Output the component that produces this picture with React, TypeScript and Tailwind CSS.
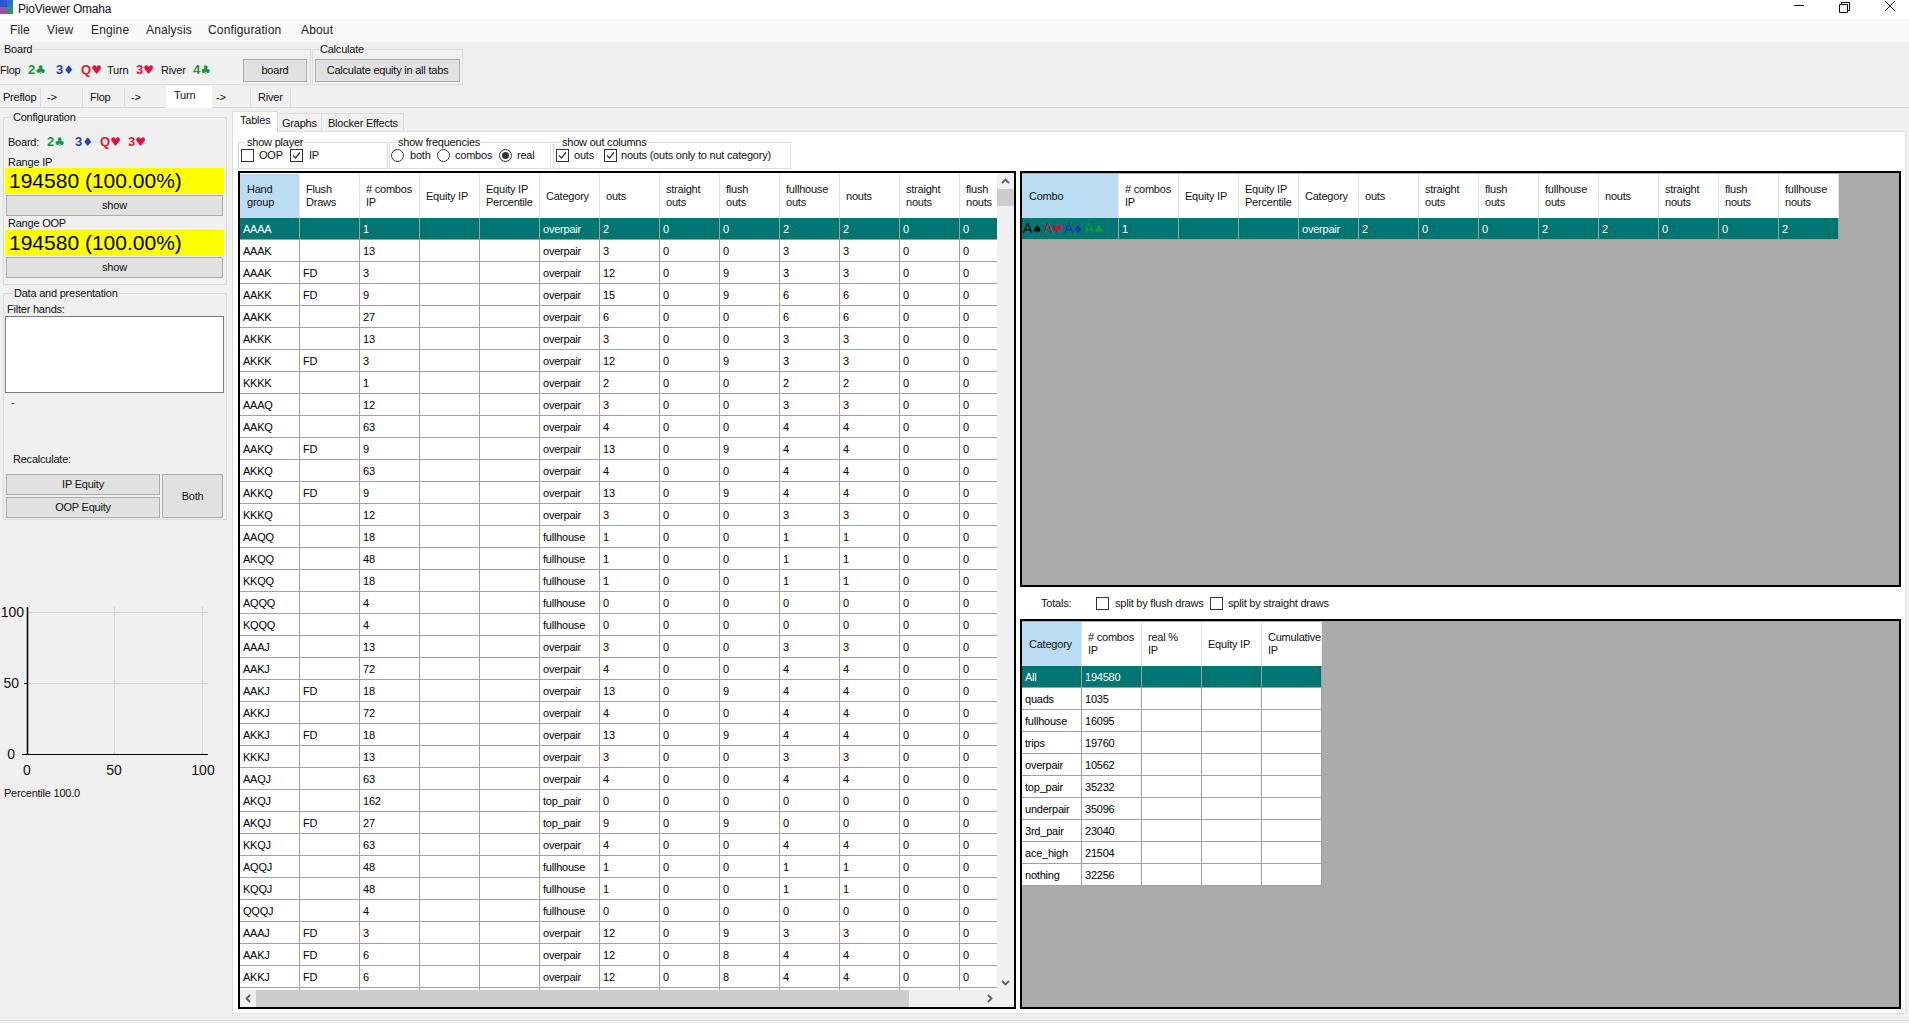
import type { ReactNode } from "react";

const FONT = "font-['Liberation_Sans',Arial,sans-serif]";

type Row = [string, string, string, string, string, string, string, string, string, string, string];

// hand, flush draws, combos, category, outs, straight, flush, fullhouse, nouts, straight nouts, flush nouts
const rows: Row[] = [
  ["AAAA", "", "1", "overpair", "2", "0", "0", "2", "2", "0", "0"],
  ["AAAK", "", "13", "overpair", "3", "0", "0", "3", "3", "0", "0"],
  ["AAAK", "FD", "3", "overpair", "12", "0", "9", "3", "3", "0", "0"],
  ["AAKK", "FD", "9", "overpair", "15", "0", "9", "6", "6", "0", "0"],
  ["AAKK", "", "27", "overpair", "6", "0", "0", "6", "6", "0", "0"],
  ["AKKK", "", "13", "overpair", "3", "0", "0", "3", "3", "0", "0"],
  ["AKKK", "FD", "3", "overpair", "12", "0", "9", "3", "3", "0", "0"],
  ["KKKK", "", "1", "overpair", "2", "0", "0", "2", "2", "0", "0"],
  ["AAAQ", "", "12", "overpair", "3", "0", "0", "3", "3", "0", "0"],
  ["AAKQ", "", "63", "overpair", "4", "0", "0", "4", "4", "0", "0"],
  ["AAKQ", "FD", "9", "overpair", "13", "0", "9", "4", "4", "0", "0"],
  ["AKKQ", "", "63", "overpair", "4", "0", "0", "4", "4", "0", "0"],
  ["AKKQ", "FD", "9", "overpair", "13", "0", "9", "4", "4", "0", "0"],
  ["KKKQ", "", "12", "overpair", "3", "0", "0", "3", "3", "0", "0"],
  ["AAQQ", "", "18", "fullhouse", "1", "0", "0", "1", "1", "0", "0"],
  ["AKQQ", "", "48", "fullhouse", "1", "0", "0", "1", "1", "0", "0"],
  ["KKQQ", "", "18", "fullhouse", "1", "0", "0", "1", "1", "0", "0"],
  ["AQQQ", "", "4", "fullhouse", "0", "0", "0", "0", "0", "0", "0"],
  ["KQQQ", "", "4", "fullhouse", "0", "0", "0", "0", "0", "0", "0"],
  ["AAAJ", "", "13", "overpair", "3", "0", "0", "3", "3", "0", "0"],
  ["AAKJ", "", "72", "overpair", "4", "0", "0", "4", "4", "0", "0"],
  ["AAKJ", "FD", "18", "overpair", "13", "0", "9", "4", "4", "0", "0"],
  ["AKKJ", "", "72", "overpair", "4", "0", "0", "4", "4", "0", "0"],
  ["AKKJ", "FD", "18", "overpair", "13", "0", "9", "4", "4", "0", "0"],
  ["KKKJ", "", "13", "overpair", "3", "0", "0", "3", "3", "0", "0"],
  ["AAQJ", "", "63", "overpair", "4", "0", "0", "4", "4", "0", "0"],
  ["AKQJ", "", "162", "top_pair", "0", "0", "0", "0", "0", "0", "0"],
  ["AKQJ", "FD", "27", "top_pair", "9", "0", "9", "0", "0", "0", "0"],
  ["KKQJ", "", "63", "overpair", "4", "0", "0", "4", "4", "0", "0"],
  ["AQQJ", "", "48", "fullhouse", "1", "0", "0", "1", "1", "0", "0"],
  ["KQQJ", "", "48", "fullhouse", "1", "0", "0", "1", "1", "0", "0"],
  ["QQQJ", "", "4", "fullhouse", "0", "0", "0", "0", "0", "0", "0"],
  ["AAAJ", "FD", "3", "overpair", "12", "0", "9", "3", "3", "0", "0"],
  ["AAKJ", "FD", "6", "overpair", "12", "0", "8", "4", "4", "0", "0"],
  ["AKKJ", "FD", "6", "overpair", "12", "0", "8", "4", "4", "0", "0"],
  ["", "", "", "", "", "", "", "", "", "", ""],
];

const outsHeaders = [
  "outs",
  "straight\nouts",
  "flush\nouts",
  "fullhouse\nouts",
  "nouts",
  "straight\nnouts",
  "flush\nnouts",
];

const totals = [
  ["All", "194580"],
  ["quads", "1035"],
  ["fullhouse", "16095"],
  ["trips", "19760"],
  ["overpair", "10562"],
  ["top_pair", "35232"],
  ["underpair", "35096"],
  ["3rd_pair", "23040"],
  ["ace_high", "21504"],
  ["nothing", "32256"],
];

const suitColor = {
  "♣": "text-[#169a3e]",
  "♦": "text-[#2c3fb4]",
  "♥": "text-[#e3103c]",
};

function Card({ rank, suit, className }: { rank: string; suit: "♣" | "♦" | "♥"; className: string }) {
  return (
    <span className={`${className} ${suitColor[suit]} shrink-0 whitespace-nowrap text-[13px] font-bold tracking-normal`}>
      {rank}
      <span className="font-['DejaVu_Sans'] text-[12px]">{suit}</span>
    </span>
  );
}

function Group({ title, className, titleClass = "left-[8px]", children }: { title: string; className: string; titleClass?: string; children?: ReactNode }) {
  return (
    <div className={`relative border border-[#dcdcdc] ${className}`}>
      <span className={`absolute -top-[8px] ${titleClass} bg-inherit px-[1px] leading-[14px] whitespace-nowrap`}>{title}</span>
      {children}
    </div>
  );
}

function Button({ className, children }: { className: string; children: ReactNode }) {
  return (
    <div className={`flex items-center justify-center border border-[#adadad] bg-[#e1e1e1] ${className}`}>{children}</div>
  );
}

function Check({ checked = false, className = "" }: { checked?: boolean; className?: string }) {
  return (
    <span className={`flex h-[13px] w-[13px] shrink-0 items-center justify-center border border-[#333] bg-white ${className}`}>
      {checked && (
        <svg width="11" height="11" viewBox="0 0 11 11" fill="none" stroke="#333" strokeWidth="1.2">
          <path d="M2 5.5 L4.5 8 L9 2.5" />
        </svg>
      )}
    </span>
  );
}

function Radio({ checked = false, className = "" }: { checked?: boolean; className?: string }) {
  return (
    <span className={`flex h-[13px] w-[13px] shrink-0 items-center justify-center rounded-full border border-[#333] bg-white ${className}`}>
      {checked && <span className="h-[7px] w-[7px] rounded-full bg-[#333]" />}
    </span>
  );
}

function Chevron({ dir }: { dir: "up" | "down" | "left" | "right" }) {
  const d = {
    up: "M1 6 L4.5 2.5 L8 6",
    down: "M1 3 L4.5 6.5 L8 3",
    left: "M6 1 L2.5 4.5 L6 8",
    right: "M3 1 L6.5 4.5 L3 8",
  }[dir];
  return (
    <svg width="9" height="9" viewBox="0 0 9 9" fill="none" stroke="#606060" strokeWidth="1.8">
      <path d={d} />
    </svg>
  );
}

function HeaderCell({ text, sorted = false, className = "w-[60px]" }: { text: string; sorted?: boolean; className?: string }) {
  return (
    <div className={`flex h-[44px] shrink-0 items-center overflow-hidden whitespace-pre-line border-r border-[#e4e4e4] leading-[13px] ${sorted ? "bg-[#bcdcf4] pl-[7px]" : "bg-white pl-[6px]"} ${className}`}>
      {text}
    </div>
  );
}

function Cell({ children, selected, className = "w-[60px]" }: { children?: ReactNode; selected: boolean; className?: string }) {
  return (
    <div className={`flex h-[22px] shrink-0 items-center overflow-hidden whitespace-nowrap border-r border-b border-[#a0a0a0] pt-[1px] pl-[3px] ${selected ? "bg-[#007672] text-white" : "bg-white text-black"} ${className}`}>
      {children}
    </div>
  );
}

function MainTable() {
  const headers = ["Flush\nDraws", "# combos\nIP", "Equity IP", "Equity IP\nPercentile", "Category", ...outsHeaders];
  return (
    <div className="flex h-[838px] w-[778px] shrink-0 flex-col border-2 border-black bg-white">
      <div className="flex min-h-0 flex-1">
        <div className="w-[758px] overflow-hidden pt-[1px]">
          <div className="flex">
            <HeaderCell text={"Hand\ngroup"} sorted />
            {headers.map((h, i) => (
              <HeaderCell key={i} text={h} />
            ))}
          </div>
          {rows.map((r, i) => {
            const selected = i === 0;
            const cells = [r[0], r[1], r[2], "", "", r[3], r[4], r[5], r[6], r[7], r[8], r[9], r[10]];
            return (
              <div key={i} className="flex">
                {cells.map((c, j) => (
                  <Cell key={j} selected={selected}>
                    {c}
                  </Cell>
                ))}
              </div>
            );
          })}
        </div>
        <div className="flex w-[17px] shrink-0 flex-col bg-[#f0f0f0]">
          <div className="flex h-[16px] items-center justify-center">
            <Chevron dir="up" />
          </div>
          <div className="h-[17px] bg-[#cdcdcd]" />
          <div className="flex-1" />
          <div className="flex h-[16px] items-center justify-center">
            <Chevron dir="down" />
          </div>
        </div>
      </div>
      <div className="flex h-[17px] shrink-0 items-center bg-[#f0f0f0]">
        <div className="flex w-[16px] items-center justify-center">
          <Chevron dir="left" />
        </div>
        <div className="h-full w-[653px] bg-[#cdcdcd]" />
        <div className="w-[72px]" />
        <div className="flex w-[17px] items-center justify-center">
          <Chevron dir="right" />
        </div>
      </div>
    </div>
  );
}

function ComboCell() {
  const cards: [string, string][] = [
    ["♠", "text-black"],
    ["♥", "text-[#c8163c]"],
    ["♦", "text-[#2030b0]"],
    ["♣", "text-[#109a30]"],
  ];
  return (
    <div className="flex h-[22px] w-[97px] shrink-0 items-center overflow-hidden border-r border-b border-[#a0a0a0] bg-[#007672] pl-[1px]">
      {cards.map(([s, color]) => (
        <span key={s} className={`w-[20.5px] shrink-0 whitespace-nowrap text-[14px] tracking-normal ${color}`}>
          A<span className="font-['DejaVu_Sans'] text-[11px]">{s}</span>
        </span>
      ))}
    </div>
  );
}

function ComboTable() {
  const headers = ["# combos\nIP", "Equity IP", "Equity IP\nPercentile", "Category", ...outsHeaders, "fullhouse\nnouts"];
  const values = ["1", "", "", "overpair", "2", "0", "0", "2", "2", "0", "0", "2"];
  return (
    <div className="h-[416px] shrink-0 border-2 border-black bg-[#ababab] pt-[1px]">
      <div className="flex">
        <HeaderCell text="Combo" sorted className="w-[97px]" />
        {headers.map((h, i) => (
          <HeaderCell key={i} text={h} />
        ))}
      </div>
      <div className="flex">
        <ComboCell />
        {values.map((v, i) => (
          <Cell key={i} selected>
            {v}
          </Cell>
        ))}
      </div>
    </div>
  );
}

function TotalsTable() {
  const headers = ["# combos\nIP", "real %\nIP", "Equity IP", "Cumulative\nIP"];
  return (
    <div className="min-h-0 flex-1 border-2 border-black bg-[#ababab] pt-[1px]">
      <div className="flex">
        <HeaderCell text="Category" sorted />
        {headers.map((h, i) => (
          <HeaderCell key={i} text={h} />
        ))}
      </div>
      {totals.map(([name, n], i) => (
        <div key={name} className="flex">
          <Cell selected={i === 0}>{name}</Cell>
          <Cell selected={i === 0}>{n}</Cell>
          <Cell selected={i === 0} />
          <Cell selected={i === 0} />
          <Cell selected={i === 0} />
        </div>
      ))}
    </div>
  );
}

function LeftColumn() {
  return (
    <div className="w-[232px] shrink-0 pt-[9px]">
      <Group title="Configuration" className="mx-[3px] h-[168px] w-[224px] bg-[#f0f0f0]">
        <div className="mt-[16px] flex h-[16px] items-center pl-[4px]">
          <span className="w-[39px] shrink-0">Board:</span>
          <Card rank="2" suit="♣" className="w-[28px]" />
          <Card rank="3" suit="♦" className="w-[25px]" />
          <Card rank="Q" suit="♥" className="w-[28px]" />
          <Card rank="3" suit="♥" className="w-[24px]" />
        </div>
        <div className="mt-[5px] h-[13px] pl-[4px] leading-[14px]">Range IP</div>
        <div className="mx-[1px] h-[26px] w-[219px] bg-[#ffff00] pl-[4px] text-[21px] leading-[26px] tracking-normal text-black">194580 (100.00%)</div>
        <Button className="mt-[1px] ml-[2px] h-[21px] w-[217px]">show</Button>
        <div className="h-[14px] pl-[4px] leading-[14px]">Range OOP</div>
        <div className="mx-[1px] h-[26px] w-[219px] bg-[#ffff00] pl-[4px] text-[21px] leading-[26px] tracking-normal text-black">194580 (100.00%)</div>
        <Button className="mt-[1px] ml-[2px] h-[21px] w-[217px]">show</Button>
      </Group>

      <Group title="Data and presentation" titleClass="left-[9px]" className="mx-[3px] mt-[8px] h-[227px] w-[224px] bg-[#f0f0f0]">
        <div className="mt-[9px] h-[13px] pl-[3px] leading-[13px]">Filter hands:</div>
        <div className="mx-[1px] h-[77px] w-[219px] border border-[#7a7a7a] bg-white" />
        <div className="mt-[2px] h-[14px] pl-[7px] leading-[14px] text-[#8b0000]">-</div>
        <div className="mt-[43px] h-[14px] pl-[9px] leading-[14px]">Recalculate:</div>
        <div className="mt-[8px] ml-[2px] flex gap-[2px]">
          <div className="flex w-[154px] flex-col gap-[2px]">
            <Button className="h-[21px]">IP Equity</Button>
            <Button className="h-[21px]">OOP Equity</Button>
          </div>
          <Button className="h-[44px] w-[61px]">Both</Button>
        </div>
      </Group>

      <svg width="225" height="186" className="mt-[80px] block font-['Liberation_Sans'] tracking-normal" fill="#111">
        <g stroke="#d3d3d3" strokeWidth="1">
          <line x1="27" y1="12.5" x2="208" y2="12.5" />
          <line x1="27" y1="83.5" x2="208" y2="83.5" />
          <line x1="114.5" y1="7" x2="114.5" y2="154" />
          <line x1="202.5" y1="7" x2="202.5" y2="154" />
        </g>
        <g stroke="#000">
          <line x1="27.5" y1="7" x2="27.5" y2="155" strokeWidth="1.5" />
          <line x1="22" y1="154.5" x2="208" y2="154.5" strokeWidth="1.2" />
          <line x1="24" y1="83.5" x2="27" y2="83.5" strokeWidth="1" />
        </g>
        <g fontSize="14" textAnchor="end">
          <text x="24" y="17">100</text>
          <text x="19" y="88">50</text>
          <text x="15" y="159">0</text>
        </g>
        <g fontSize="14" textAnchor="middle">
          <text x="27" y="175">0</text>
          <text x="114" y="175">50</text>
          <text x="203" y="175">100</text>
        </g>
      </svg>
      <div className="h-[14px] pl-[4px] leading-[14px]">Percentile 100.0</div>
    </div>
  );
}

function OptionsRow() {
  return (
    <div className="flex h-[39px] shrink-0 pt-[10px] pl-[5px]">
      <Group title="show player" titleClass="left-[7px]" className="h-[27px] w-[150px] bg-white">
        <div className="flex h-full items-center pl-[2px]">
          <Check />
          <span className="ml-[5px] w-[31px]">OOP</span>
          <Check checked />
          <span className="ml-[6px]">IP</span>
        </div>
      </Group>
      <Group title="show frequencies" titleClass="left-[7px]" className="ml-[1px] h-[27px] w-[162px] bg-white">
        <div className="flex h-full items-center pl-[1px]">
          <Radio />
          <span className="ml-[6px] w-[27px]">both</span>
          <Radio />
          <span className="ml-[5px] w-[44px]">combos</span>
          <Radio checked />
          <span className="ml-[5px]">real</span>
        </div>
      </Group>
      <Group title="show out columns" titleClass="left-[7px]" className="ml-[2px] h-[27px] w-[238px] bg-white">
        <div className="flex h-full items-center pl-[2px]">
          <Check checked />
          <span className="ml-[5px] w-[30px]">outs</span>
          <Check checked />
          <span className="ml-[4px] whitespace-nowrap">nouts (outs only to nut category)</span>
        </div>
      </Group>
    </div>
  );
}

export default function App() {
  return (
    <div className={`${FONT} flex h-[1023px] w-[1909px] flex-col overflow-hidden bg-[#f0f0f0] text-[11px] tracking-[-0.22px] text-[#111]`}>
      {/* title bar */}
      <div className="flex h-[18px] shrink-0 items-center bg-white text-[12px]">
        <svg width="13" height="14" viewBox="0 0 13 14" className="mb-[4px] shrink-0">
          <rect width="7" height="7" fill="#2f55c8" />
          <rect x="7" width="6" height="7" fill="#2b6fd0" />
          <rect y="7" width="7" height="7" fill="#9a4db2" />
          <rect x="7" y="7" width="6" height="7" fill="#1fa060" />
        </svg>
        <span className="ml-[5px] flex-1">PioViewer Omaha</span>
        <svg width="110" height="18" viewBox="0 0 110 18" fill="none" stroke="#111" strokeWidth="1" className="shrink-0">
          <path d="M0 5.5 H10" />
          <path d="M45.5 4.5 H53.5 V12.5 H45.5 Z M47.5 4.5 V2.5 H55.5 V10.5 H53.5" />
          <path d="M91 1 L101 11 M101 1 L91 11" />
        </svg>
        <span className="w-[5px] shrink-0" />
      </div>

      {/* menu */}
      <div className="flex h-[24px] shrink-0 items-center bg-[#f9f9f9] pl-[10px] text-[12px] tracking-[0.15px] text-[#222]">
        <span className="w-[37px]">File</span>
        <span className="w-[44px]">View</span>
        <span className="w-[55px]">Engine</span>
        <span className="w-[62px]">Analysis</span>
        <span className="w-[93px]">Configuration</span>
        <span>About</span>
      </div>

      {/* board and calculate */}
      <div className="flex h-[44px] shrink-0 pt-[7px]">
        <Group title="Board" titleClass="left-[3px]" className="h-[36px] w-[311px] border-l-0 bg-[#f0f0f0]">
          <div className="flex h-full items-center pt-[6px]">
            <span className="w-[28px] shrink-0">Flop</span>
            <Card rank="2" suit="♣" className="w-[28px]" />
            <Card rank="3" suit="♦" className="w-[25px]" />
            <Card rank="Q" suit="♥" className="w-[26px]" />
            <span className="w-[29px] shrink-0">Turn</span>
            <Card rank="3" suit="♥" className="w-[25px]" />
            <span className="w-[32px] shrink-0">River</span>
            <Card rank="4" suit="♣" className="w-[50px]" />
            <Button className="h-[23px] w-[64px] shrink-0">board</Button>
          </div>
        </Group>
        <Group title="Calculate" titleClass="left-[6px]" className="ml-[1px] h-[36px] w-[151px] bg-[#f0f0f0]">
          <div className="flex h-full items-center pt-[6px] pl-[2px]">
            <Button className="h-[23px] w-[145px]">Calculate equity in all tabs</Button>
          </div>
        </Group>
      </div>

      {/* street tabs */}
      <div className="flex h-[22px] shrink-0 border-b border-[#d9d9d9]">
        <div className="mt-[2px] h-[19px] w-[41px] border-r border-[#dcdcdc] pl-[3px] leading-[19px]">Preflop</div>
        <div className="mt-[2px] h-[19px] w-[42px] border-r border-[#dcdcdc] pl-[6px] leading-[19px]">-&gt;</div>
        <div className="mt-[2px] h-[19px] w-[42px] border-r border-[#dcdcdc] pl-[7px] leading-[19px]">Flop</div>
        <div className="mt-[2px] h-[19px] w-[41px] pl-[6px] leading-[19px]">-&gt;</div>
        <div className="z-10 h-[22px] w-[46px] bg-white pl-[8px] leading-[19px]">Turn</div>
        <div className="mt-[2px] h-[19px] w-[39px] border-r border-[#dcdcdc] pl-[4px] leading-[19px]">-&gt;</div>
        <div className="mt-[2px] h-[19px] w-[40px] border-r border-[#dcdcdc] pl-[7px] leading-[19px]">River</div>
      </div>

      {/* main area */}
      <div className="flex h-[906px] shrink-0">
        <LeftColumn />
        <div className="flex h-full w-[1674px] shrink-0 flex-col">
          <div className="flex h-[23px] shrink-0 items-end">
            <div className="z-10 -mb-[1px] h-[21px] w-[46px] border border-b-0 border-[#dcdcdc] bg-white pl-[7px] leading-[17px]">Tables</div>
            <div className="h-[18px] w-[44px] border-t border-r border-[#dcdcdc] pl-[4px] leading-[18px]">Graphs</div>
            <div className="h-[18px] w-[82px] border-t border-r border-[#dcdcdc] pl-[6px] leading-[18px]">Blocker Effects</div>
          </div>
          <div className="flex min-h-0 flex-1 flex-col border border-[#dcdcdc] bg-white">
            <OptionsRow />
            <div className="flex gap-[4px] pl-[5px]">
              <MainTable />
              <div className="flex h-[838px] w-[881px] shrink-0 flex-col">
                <ComboTable />
                <div className="flex h-[32px] shrink-0 items-center pl-[21px]">
                  <span className="w-[55px]">Totals:</span>
                  <Check />
                  <span className="ml-[6px] w-[95px] whitespace-nowrap">split by flush draws</span>
                  <Check />
                  <span className="ml-[5px] whitespace-nowrap">split by straight draws</span>
                </div>
                <TotalsTable />
              </div>
            </div>
          </div>
        </div>
      </div>

      {/* status strip */}
      <div className="mt-[6px] h-[3px] border-t border-[#d9d9d9] bg-[#f8f8f8]" />
    </div>
  );
}
